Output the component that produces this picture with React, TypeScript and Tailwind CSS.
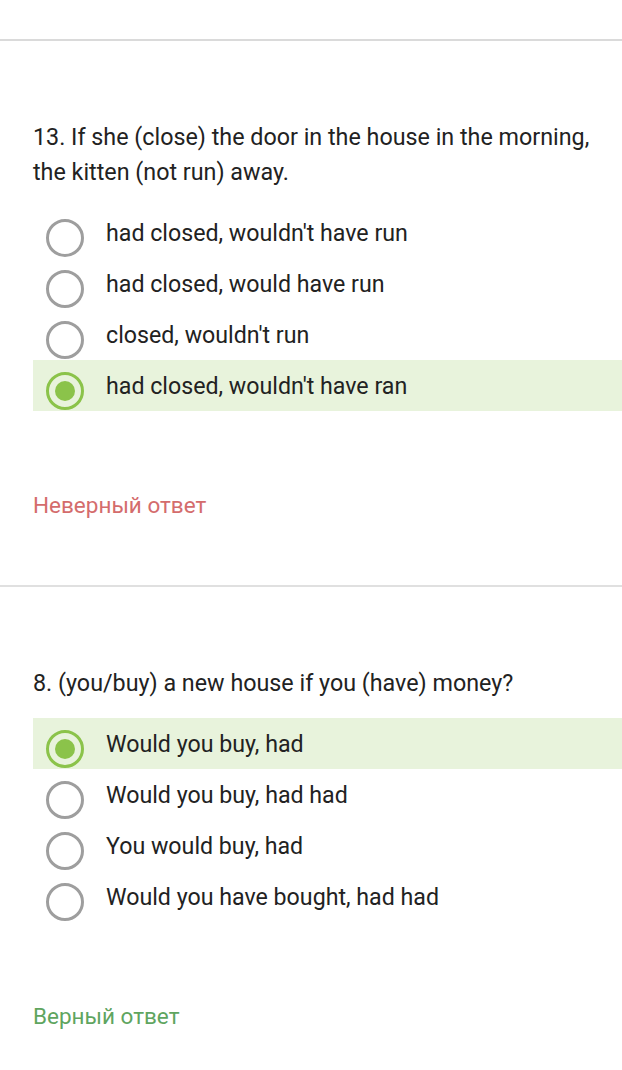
import React from 'react';

type Question = {
  title: string;
  options: string[];
  selected: number;
  correct: boolean;
};

const questions: Question[] = [
  {
    title: '13. If she (close) the door in the house in the morning, the kitten (not run) away.',
    options: [
      "had closed, wouldn't have run",
      'had closed, would have run',
      "closed, wouldn't run",
      "had closed, wouldn't have ran",
    ],
    selected: 3,
    correct: false,
  },
  {
    title: '8. (you/buy) a new house if you (have) money?',
    options: ['Would you buy, had', 'Would you buy, had had', 'You would buy, had', 'Would you have bought, had had'],
    selected: 0,
    correct: true,
  },
];

const Radio = ({ checked }: { checked: boolean }) => (
  <div
    className={`mt-[12px] ml-[13px] flex h-[38px] w-[38px] shrink-0 items-center justify-center rounded-full border-[3.5px] ${
      checked ? 'border-[#8bc34a]' : 'border-[#9e9e9e]'
    }`}
  >
    {checked && <div className="h-[20px] w-[20px] rounded-full bg-[#8bc34a]" />}
  </div>
);

const QuestionBlock = ({ q }: { q: Question }) => (
  <section className="border-b-2 border-[#e0e0e0] pl-[33px] pt-[79px] pb-[65px]">
    <p className="pr-[24px] text-[23.3px] leading-[35px] text-[#222222]">{q.title}</p>
    <div className="mt-[17px] flex flex-col">
      {q.options.map((opt, i) => (
        <div key={i} className={`flex h-[51px] items-start ${i === q.selected ? 'bg-[#e8f3dc]' : ''}`}>
          <Radio checked={i === q.selected} />
          <span className="ml-[22px] pt-[11px] text-[23.2px] leading-[30px] text-[#222222]">{opt}</span>
        </div>
      ))}
    </div>
    <p className={`mt-[79px] text-[22.5px] leading-[30px] ${q.correct ? 'text-[#5fa55f]' : 'text-[#d46c6c]'}`}>
      {q.correct ? 'Верный ответ' : 'Неверный ответ'}
    </p>
  </section>
);

export default function App() {
  return (
    <div className="min-h-screen bg-white" style={{ fontFamily: 'Roboto, "Noto Sans", sans-serif' }}>
      <div className="h-[41px] border-b-2 border-[#dadada]" />
      {questions.map((q, i) => (
        <QuestionBlock key={i} q={q} />
      ))}
    </div>
  );
}
